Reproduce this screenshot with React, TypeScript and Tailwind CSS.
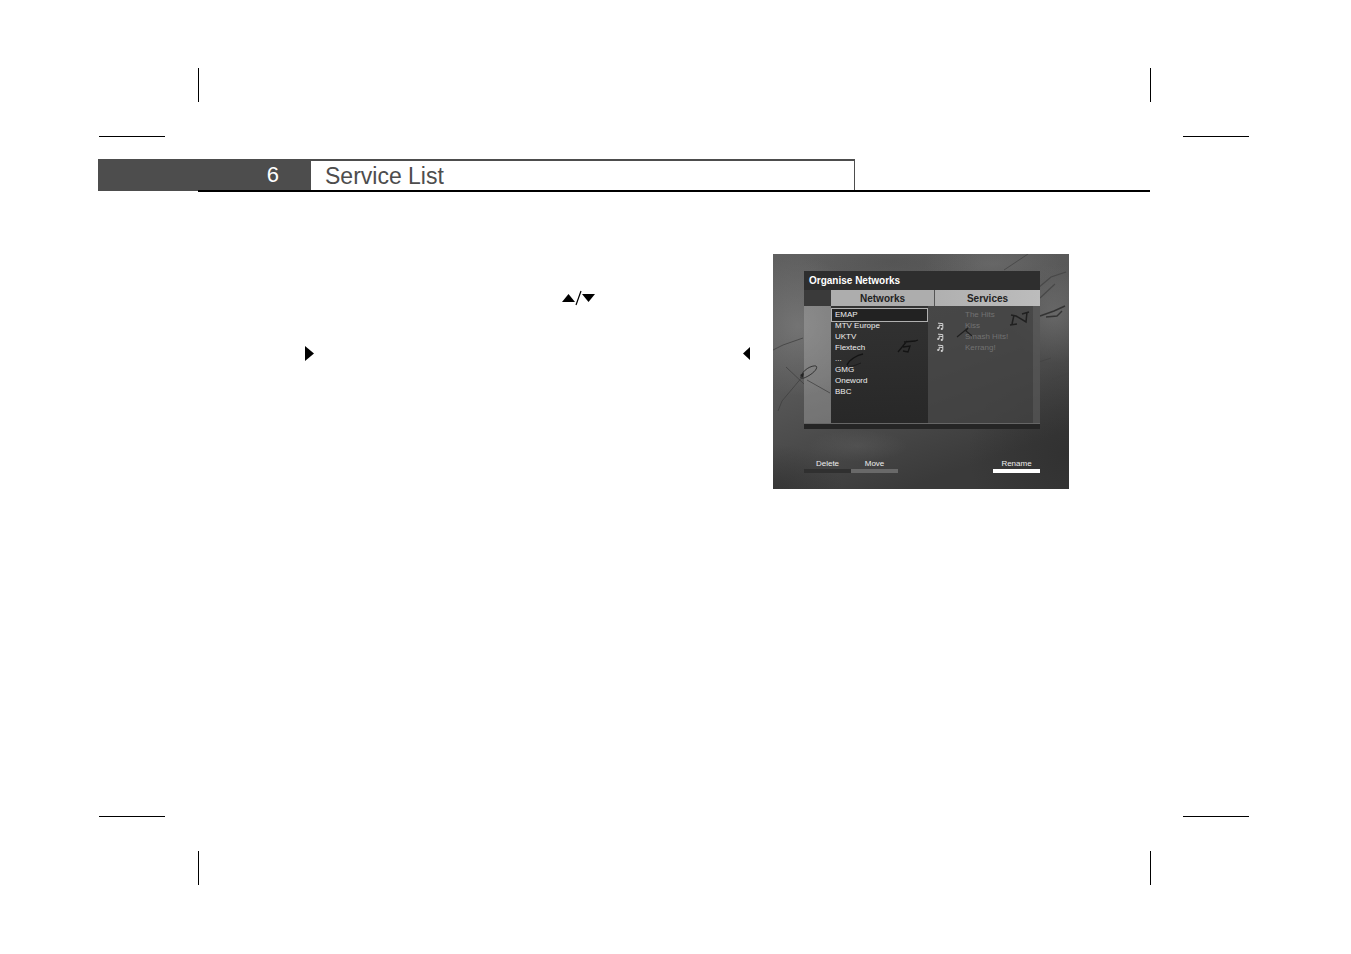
import React, { useState } from 'react';

const networks = ['EMAP', 'MTV Europe', 'UKTV', 'Flextech', '...', 'GMG', 'Oneword', 'BBC'];

const services = [
  { name: 'The Hits', music: false },
  { name: 'Kiss', music: true },
  { name: 'Smash Hits!', music: true },
  { name: 'Kerrang!', music: true },
];

function MusicNote() {
  return (
    <svg className="w-2 h-2" viewBox="0 0 8 8" fill="none" stroke="#d4d4d4">
      <path d="M2 1.2L6.8 1.6V6.5M3.2 5.8V3.2L6.8 3.6" strokeWidth="1" />
      <circle cx="2.2" cy="6" r="1.1" fill="#d4d4d4" stroke="none" />
      <circle cx="5.8" cy="6.9" r="1.1" fill="#d4d4d4" stroke="none" />
    </svg>
  );
}

// Marbled map texture behind the menu
function Backdrop() {
  return (
    <svg className="absolute inset-0 w-full h-full" viewBox="0 0 296 235" preserveAspectRatio="none" fill="none">
      <defs>
        <linearGradient id="base" x1="0" y1="0" x2="0.45" y2="1">
          <stop offset="0" stopColor="#606060" />
          <stop offset="0.5" stopColor="#575757" />
          <stop offset="1" stopColor="#3a3a3a" />
        </linearGradient>
        <radialGradient id="light">
          <stop offset="0" stopColor="#8c8c8c" stopOpacity="0.5" />
          <stop offset="1" stopColor="#8c8c8c" stopOpacity="0" />
        </radialGradient>
        <radialGradient id="dark">
          <stop offset="0" stopColor="#282828" stopOpacity="0.5" />
          <stop offset="1" stopColor="#282828" stopOpacity="0" />
        </radialGradient>
      </defs>
      <rect width="296" height="235" fill="url(#base)" />
      <ellipse cx="25" cy="72" rx="65" ry="70" fill="url(#light)" />
      <ellipse cx="220" cy="10" rx="70" ry="24" fill="url(#light)" opacity="0.5" />
      <ellipse cx="282" cy="60" rx="45" ry="50" fill="url(#light)" opacity="0.7" />
      <ellipse cx="120" cy="8" rx="90" ry="24" fill="url(#dark)" opacity="0.3" />
      <ellipse cx="295" cy="200" rx="100" ry="90" fill="url(#dark)" />
      <ellipse cx="0" cy="235" rx="70" ry="45" fill="url(#dark)" />
      <ellipse cx="85" cy="192" rx="50" ry="16" fill="url(#light)" opacity="0.3" />
      <path d="M0 96L10 91L30 84M5 157L9 147L30 122M13 113L31 130" stroke="#404040" strokeWidth="0.8" />
      <path d="M265 34L278 23L293 18M267 44L282 30" stroke="#484848" strokeWidth="1.2" />
      <path d="M267 62L281 57L292 52M273 63L284 62L289 57" stroke="#333" strokeWidth="1.4" />
      <path d="M231 16L255 0M266 108L278 104M278 126L296 119" stroke="#444" strokeWidth="0.8" />
    </svg>
  );
}

// Handwriting strokes that show through the panel
function Scrawl() {
  return (
    <svg className="absolute inset-0 w-full h-full pointer-events-none" viewBox="0 0 296 235" preserveAspectRatio="none" fill="none" stroke="#202020">
      <path d="M28 123C29 116 39 111 43 112C46 114 39 121 31 124C28 125 27 123 28 123" strokeWidth="0.8" />
      <path d="M27 121L31 119L30 124Z" fill="#242424" stroke="none" />
      <path d="M34 126L57 139" strokeWidth="0.5" />
      <path d="M90 100C84 101 76 106 74 111" stroke="#141414" strokeWidth="1.4" />
      <path d="M74 111C76 114 83 111 88 109" stroke="#141414" strokeWidth="0.7" />
      <path d="M125 98L134 87M131 88L142 87L145 86M130 93L137 92L135 98L130 97" stroke="#141414" strokeWidth="1.3" />
      <path d="M184 83L195 74L193 77L199 82" strokeWidth="1.2" />
      <path d="M237 71L244 70M239 70L241 61M238 61L243 62L253 68L254 58M249 60L256 58" strokeWidth="1.5" />
    </svg>
  );
}

function SideMarks() {
  return (
    <div className="flex justify-between">
      <div className="w-[66px] h-px bg-black"></div>
      <div className="w-[66px] h-px bg-black"></div>
    </div>
  );
}

function EdgeMarks() {
  return (
    <div className="flex justify-between ml-[99px] mr-[98px]">
      <div className="w-px h-[34px] bg-black"></div>
      <div className="w-px h-[34px] bg-black"></div>
    </div>
  );
}

export default function App() {
  const [selected, setSelected] = useState('EMAP');

  return (
    <div className="min-h-screen flex flex-col bg-white pl-[99px] pr-[102px] pt-[68px] pb-[69px] font-['Liberation_Sans',sans-serif]">
      <EdgeMarks />
      <div className="mt-[34px]">
        <SideMarks />
      </div>

      {/* Chapter header */}
      <header className="flex -ml-px mt-[22px]">
        <div className="w-[100px] h-8 bg-[#4d4d4d]"></div>
        <div className="flex-1 flex mr-[99px] h-[33px] border-b-2 border-black">
          <div className="w-[113px] pr-8 flex items-center justify-end bg-[#4d4d4d] text-white text-[22px]">6</div>
          <h1 className="w-[544px] pl-[14px] flex items-center border-t-2 border-r border-[#4d4d4d] text-[#4d4d4d] text-[23px] leading-7">
            Service List
          </h1>
        </div>
      </header>

      {/* Content */}
      <main className="flex-1 flex items-start gap-[23px] pl-[206px] pt-[62px]">
        <div className="w-[445px] pt-9">
          <div className="flex items-center pl-[257px] h-4">
            <svg className="w-[13px] h-2" viewBox="0 0 13 8">
              <path d="M0 8L6.5 0L13 8Z" />
            </svg>
            <svg className="w-[7px] h-4" viewBox="0 0 7 16" stroke="#000" strokeWidth="1.2">
              <path d="M1 15L6 1" />
            </svg>
            <svg className="w-[13px] h-2" viewBox="0 0 13 8">
              <path d="M0 0L6.5 8L13 0Z" />
            </svg>
          </div>
          <div className="flex items-center justify-between mt-10">
            <svg className="w-[9px] h-[15px]" viewBox="0 0 9 15">
              <path d="M0 0L9 7.5L0 15Z" />
            </svg>
            <svg className="w-[7px] h-[13px]" viewBox="0 0 7 13">
              <path d="M7 0L0 6.5L7 13Z" />
            </svg>
          </div>
        </div>

        {/* TV screen */}
        <section className="relative w-[296px] h-[235px] overflow-hidden">
          <Backdrop />
          <div className="relative pl-[31px] pr-[29px] pt-[17px]">
            <h2 className="h-[19px] pl-[5px] bg-[#2e2e2e] text-white text-[10px] leading-[19px] font-bold">
              Organise Networks
            </h2>

            <div className="flex h-4 text-[#222] text-[10px] leading-[17px] font-bold text-center">
              <div className="w-[27px] bg-[#3a3a3a]"></div>
              <h3 className="w-[104px] bg-[#adadad] border-r border-[#555]">Networks</h3>
              <h3 className="flex-1 bg-linear-to-r from-[#b0b0b0] to-[#bcbcbc]">Services</h3>
            </div>

            <div className="flex h-[117px] text-[8px] leading-[11px]">
              <div className="w-[27px] bg-[#bbb]/35"></div>
              <ul className="w-[97px] pt-[3px] bg-linear-to-b from-[#303030]/95 to-[#262626]/95 text-[#eee]">
                {networks.map((name) => (
                  <li key={name} className="flex items-center h-[11px]">
                    <button
                      onClick={() => setSelected(name)}
                      className={
                        selected === name
                          ? 'shrink-0 w-full h-[14px] pl-[3px] text-left bg-[#222] border border-[#b0b0b0]'
                          : 'shrink-0 w-full h-[11px] pl-1 text-left'
                      }
                    >
                      {name}
                    </button>
                  </li>
                ))}
              </ul>
              <ul className="flex-1 pt-[3px] bg-[#424242]/80 text-[#727272]">
                {services.map((service) => (
                  <li key={service.name} className="flex items-center h-[11px] pl-2">
                    <span className="w-[29px]">{service.music && <MusicNote />}</span>
                    {service.name}
                  </li>
                ))}
              </ul>
              <div className="w-[7px] bg-[#555]/80"></div>
            </div>
            <div className="h-1.5 bg-[#252525] border-t border-[#666]"></div>

            {/* Colour keys */}
            <div className="flex mt-[29px] text-[#eee] text-[8px] leading-[11px]">
              <button className="w-[47px] border-b-4 border-[#303030]">Delete</button>
              <button className="w-[47px] border-b-4 border-[#696969]">Move</button>
              <button className="w-[47px] ml-auto border-b-4 border-white">Rename</button>
            </div>
          </div>
          <Scrawl />
        </section>
      </main>

      <SideMarks />
      <div className="mt-[34px]">
        <EdgeMarks />
      </div>
    </div>
  );
}
